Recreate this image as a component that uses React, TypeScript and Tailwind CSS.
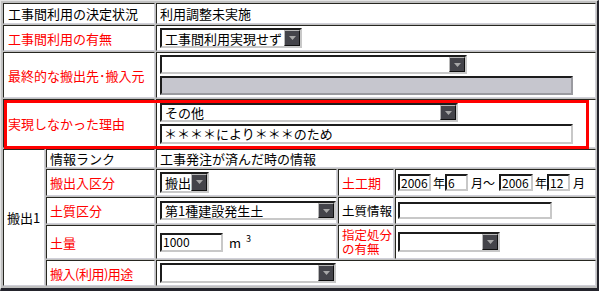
import React from "react";

const F = "font-['Noto_Sans_CJK_JP','Noto_Sans',sans-serif]";

const cell =
  "bg-white border border-t-[#262620] border-l-[#262620] border-r-[#d0d0d8] border-b-[#d0d0d8] flex items-center min-w-0";

function Arrow() {
  return (
    <div className="w-[16px] shrink-0 bg-[#44444a] border border-t-[#b8b8b8] border-l-[#b8b8b8] border-r-[#101010] border-b-[#101010] flex items-start justify-center pt-[5px]">
      <svg width="7" height="4" viewBox="0 0 7 4">
        <path d="M0 0 H7 L3.5 4 Z" fill="#a8a8a8" />
      </svg>
    </div>
  );
}

function Sel({ cls, text }: { cls: string; text?: string }) {
  return (
    <div
      className={
        "flex bg-white border-2 border-t-[#1c1c1c] border-l-[#1c1c1c] border-r-[#c8c8c8] border-b-[#c8c8c8] shrink-0 " +
        cls
      }
    >
      <div className="flex-1 flex items-center pl-[3px] text-[13px] leading-[15px] text-black whitespace-nowrap">
        {text}
      </div>
      <Arrow />
    </div>
  );
}

function Inp({ cls, text }: { cls: string; text?: string }) {
  return (
    <div
      className={
        "flex items-center bg-white border-2 border-t-[#1c1c1c] border-l-[#1c1c1c] border-r-[#c8c8c8] border-b-[#c8c8c8] shrink-0 pl-[1px] leading-[14px] text-black whitespace-nowrap " +
        cls
      }
    >
      {text}
    </div>
  );
}

export default function App() {
  return (
    <div
      className={
        "relative w-[599px] h-[291px] bg-[#c0c0c0] border-l border-t border-l-[#e4e4e4] border-t-[#e4e4e4] border-r-2 border-b-[3px] border-r-[#24242c] border-b-[#24242c] pl-[2px] pt-[2px] pr-[1px] pb-[2px] " +
        F
      }
    >
      <div className="grid grid-cols-[42px_109px_181px_56px_201px] grid-rows-[21px_26px_46px_49px_19px_27px_27px_34px_26px] gap-px text-[13px] leading-[15px]">
        {/* Row 1 */}
        <div className={cell + " col-span-2 pl-[4px] text-black"}>工事間利用の決定状況</div>
        <div className={cell + " col-span-3 pl-[3px] text-black"}>利用調整未実施</div>

        {/* Row 2 */}
        <div className={cell + " col-span-2 pl-[4px] text-[#ff0000]"}>工事間利用の有無</div>
        <div className={cell + " col-span-3 pl-[3px]"}>
          <Sel cls="w-[142px] h-[20px]" text="工事間利用実現せず" />
        </div>

        {/* Row 3 */}
        <div className={cell + " col-span-2 pl-[4px] text-[#ff0000] whitespace-nowrap"}>最終的な搬出先･搬入元</div>
        <div className={cell + " col-span-3 pl-[3px] flex-col !items-start justify-center gap-[2px]"}>
          <Sel cls="w-[307px] h-[19px]" />
          <div className="w-[413px] h-[19px] bg-[#c6c6ce] border-2 border-t-[#1c1c1c] border-l-[#1c1c1c] border-r-[#9a9aa0] border-b-[#9a9aa0]" />
        </div>

        {/* Row 4 */}
        <div className={cell + " col-span-2 pl-[4px] text-[#ff0000]"}>実現しなかった理由</div>
        <div className={cell + " col-span-3 pl-[3px] flex-col !items-start justify-center gap-[2px]"}>
          <Sel cls="w-[298px] h-[19px]" text="その他" />
          <Inp cls="w-[413px] h-[20px] text-[13px] pl-[2px]" text="＊＊＊＊により＊＊＊のため" />
        </div>

        {/* Row 5 */}
        <div className={cell + " row-span-5 pl-[3px] text-black"}>搬出1</div>
        <div className={cell + " pl-[3px] text-black"}>情報ランク</div>
        <div className={cell + " col-span-3 pl-[3px] text-black"}>工事発注が済んだ時の情報</div>

        {/* Row 6 */}
        <div className={cell + " pl-[3px] text-[#ff0000]"}>搬出入区分</div>
        <div className={cell + " pl-[3px]"}>
          <Sel cls="w-[49px] h-[21px]" text="搬出" />
        </div>
        <div className={cell + " pl-[3px] text-[#ff0000]"}>土工期</div>
        <div className={cell + " pl-[2px] text-[12px] text-black whitespace-nowrap"}>
          <Inp cls="w-[33px] h-[17px] text-[12px]" text="2006" />
          <span className="ml-[2px]">年</span>
          <Inp cls="w-[23px] h-[17px] text-[12px]" text="6" />
          <span className="ml-[3px] mr-[4px]">月～</span>
          <Inp cls="w-[34px] h-[17px] text-[12px]" text="2006" />
          <span className="ml-[2px]">年</span>
          <Inp cls="w-[23px] h-[17px] text-[12px]" text="12" />
          <span className="ml-[3px]">月</span>
        </div>

        {/* Row 7 */}
        <div className={cell + " pl-[3px] text-[#ff0000]"}>土質区分</div>
        <div className={cell + " pl-[3px]"}>
          <Sel cls="w-[176px] h-[19px]" text="第1種建設発生土" />
        </div>
        <div className={cell + " pl-[3px] text-black text-[12.5px] whitespace-nowrap"}>土質情報</div>
        <div className={cell + " pl-[2px]"}>
          <Inp cls="w-[154px] h-[17px]" />
        </div>

        {/* Row 8 */}
        <div className={cell + " pl-[3px] text-[#ff0000]"}>土量</div>
        <div className={cell + " pl-[3px] text-black"}>
          <Inp cls="w-[63px] h-[19px] text-[12px]" text="1000" />
          <span className="ml-[6px] text-[13px]">m</span>
          <span className="ml-[5px] text-[9px] leading-none -translate-y-[4px]">3</span>
        </div>
        <div className={cell + " pl-[3px] text-[#ff0000] text-[12.5px] leading-[14px]"}>
          <div className="whitespace-nowrap">
            指定処分
            <br />
            の有無
          </div>
        </div>
        <div className={cell + " pl-[2px]"}>
          <Sel cls="w-[102px] h-[20px]" />
        </div>

        {/* Row 9 */}
        <div className={cell + " pl-[3px] text-[#ff0000] tracking-[-0.5px] whitespace-nowrap"}>搬入(利用)用途</div>
        <div className={cell + " col-span-3 pl-[3px]"}>
          <Sel cls="w-[176px] h-[20px]" />
        </div>
      </div>

      {/* red annotation box */}
      <div className="absolute left-[3px] top-[99px] w-[585px] h-[49px] border-[3px] border-[#ff0000] pointer-events-none" />
    </div>
  );
}
